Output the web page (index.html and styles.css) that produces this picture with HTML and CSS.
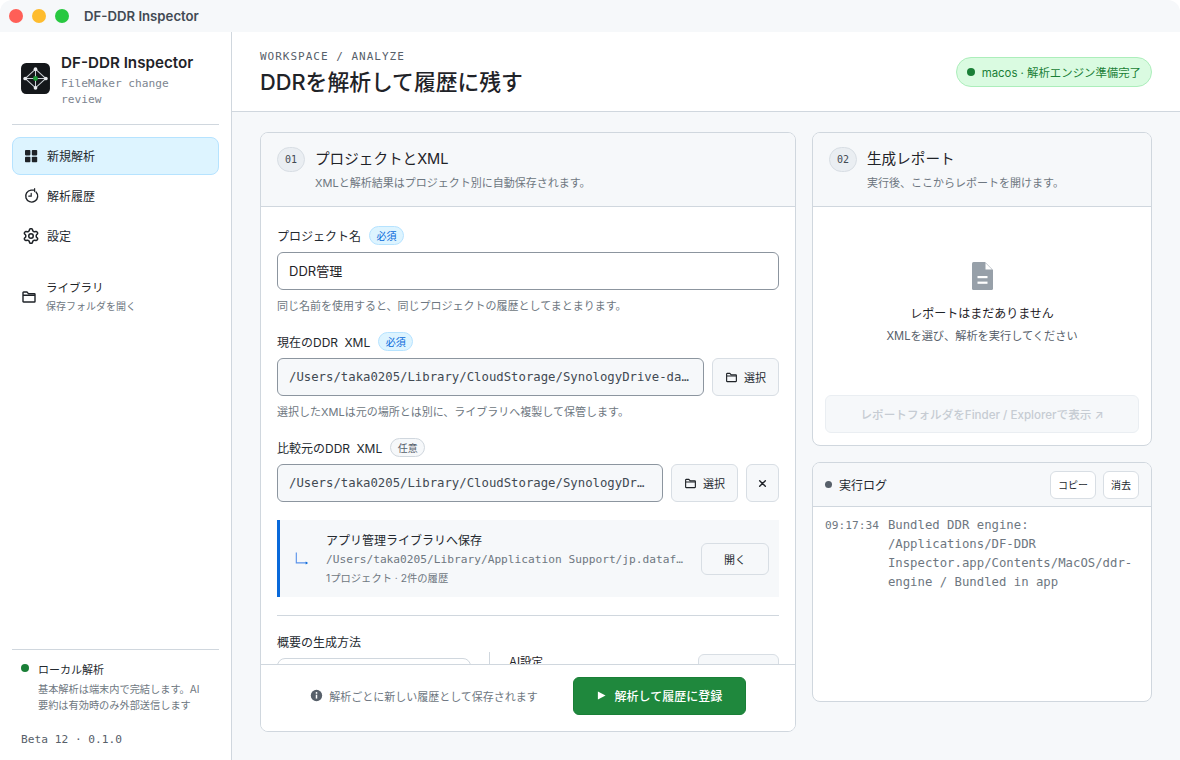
FILE: index.html
```html
<!DOCTYPE html>
<html lang="ja">

<head>
    <meta charset="UTF-8">
    <meta name="viewport" content="width=device-width, initial-scale=1.0">
    <title>DF-DDR Inspector</title>
    <link rel="stylesheet" href="styles.css">
</head>

<body>
    <div class="window">
        <div class="titlebar">
            <span class="light light-red"></span>
            <span class="light light-yellow"></span>
            <span class="light light-green"></span>
            <span class="titlebar-name">DF-DDR Inspector</span>
        </div>

        <div class="app">
            <aside class="sidebar">
                <div class="brand">
                    <svg class="brand-logo" viewBox="0 0 28 30">
                        <rect width="28" height="30" rx="5" fill="#14171a" />
                        <path d="M14 6 L24 15 L14 24 L4 15 Z M14 6 V24 M4 15 H24" fill="none" stroke="#c9ced3" stroke-width="1" />
                        <circle cx="14" cy="6" r="1.8" fill="#e8eaed" />
                        <circle cx="14" cy="24" r="1.8" fill="#e8eaed" />
                        <circle cx="4" cy="15" r="1.8" fill="#e8eaed" />
                        <circle cx="24" cy="15" r="1.8" fill="#e8eaed" />
                        <circle cx="14" cy="15" r="2.4" fill="#1f9d3a" />
                    </svg>
                    <div class="brand-text">
                        <div class="brand-name">DF-DDR Inspector</div>
                        <div class="brand-sub">FileMaker change review</div>
                    </div>
                </div>

                <nav class="nav">
                    <div class="nav-item nav-active">
                        <svg class="nav-icon" viewBox="0 0 16 16" fill="#1f2328">
                            <rect x="2" y="2" width="5.4" height="5.4" rx="0.8" />
                            <rect x="8.8" y="2" width="5.4" height="5.4" rx="0.8" />
                            <rect x="2" y="8.8" width="5.4" height="5.4" rx="0.8" />
                            <rect x="8.8" y="8.8" width="5.4" height="5.4" rx="0.8" />
                        </svg>
                        <span>新規解析</span>
                    </div>
                    <div class="nav-item">
                        <svg class="nav-icon" viewBox="0 0 16 16" fill="none" stroke="#1f2328" stroke-width="1.4" stroke-linecap="round">
                            <path d="M13 3.9 A6 6 0 1 1 8 2.1 H11.6" />
                            <path d="M11.6 0.6 V3.6" stroke-width="1.1" />
                            <path d="M8.2 5.4 V8.2 H5.8" stroke-width="1.2" />
                        </svg>
                        <span>解析履歴</span>
                    </div>
                    <div class="nav-item">
                        <svg class="nav-icon" viewBox="0 0 16 16" fill="#1f2328">
                            <path d="M8 0a8.2 8.2 0 0 1 .701.031C9.444.095 9.99.645 10.16 1.29l.288 1.107c.018.066.079.158.212.224.231.114.454.243.668.386.123.082.233.09.299.071l1.103-.303c.644-.176 1.392.021 1.82.63.27.385.506.792.704 1.218.315.675.111 1.422-.364 1.891l-.814.806c-.049.048-.098.147-.088.294.016.257.016.515 0 .772-.01.147.038.246.088.294l.814.806c.475.469.679 1.216.364 1.891a7.977 7.977 0 0 1-.704 1.217c-.428.61-1.176.807-1.82.63l-1.102-.302c-.067-.019-.177-.011-.3.071a5.909 5.909 0 0 1-.668.386c-.133.066-.194.158-.211.224l-.29 1.106c-.168.646-.715 1.196-1.458 1.26a8.006 8.006 0 0 1-1.402 0c-.743-.064-1.289-.614-1.458-1.26l-.289-1.106c-.018-.066-.079-.158-.212-.224a5.738 5.738 0 0 1-.668-.386c-.123-.082-.233-.09-.299-.071l-1.103.303c-.644.176-1.392-.021-1.82-.63a8.12 8.12 0 0 1-.704-1.218c-.315-.675-.111-1.422.363-1.891l.815-.806c.05-.048.098-.147.088-.294a6.214 6.214 0 0 1 0-.772c.01-.147-.038-.246-.088-.294l-.815-.806C.635 6.045.431 5.298.746 4.623a7.92 7.92 0 0 1 .704-1.217c.428-.61 1.176-.807 1.82-.63l1.102.302c.067.019.177.011.3-.071.214-.143.437-.272.668-.386.133-.066.194-.158.211-.224l.29-1.106C6.009.645 6.556.095 7.299.03 7.53.01 7.764 0 8 0Zm-.571 1.525c-.036.003-.108.036-.137.146l-.289 1.105c-.147.561-.549.967-.998 1.189-.173.086-.34.183-.5.29-.417.278-.97.423-1.529.27l-1.103-.303c-.109-.03-.175.016-.195.045-.22.312-.412.644-.573.99-.014.031-.021.11.059.19l.815.806c.411.406.562.957.53 1.456a4.709 4.709 0 0 0 0 .582c.032.499-.119 1.05-.53 1.456l-.815.806c-.081.08-.073.159-.059.19.162.346.353.677.573.989.02.03.085.076.195.046l1.102-.303c.56-.153 1.113-.008 1.53.27.161.107.328.204.501.29.447.222.85.629.997 1.189l.289 1.105c.029.109.101.143.137.146a6.6 6.6 0 0 0 1.142 0c.036-.003.108-.036.137-.146l.289-1.105c.147-.561.549-.967.998-1.189.173-.086.34-.183.5-.29.417-.278.97-.423 1.529-.27l1.103.303c.109.029.175-.016.195-.045.22-.313.411-.644.573-.99.014-.031.021-.11-.059-.19l-.815-.806c-.411-.406-.562-.957-.53-1.456a4.709 4.709 0 0 0 0-.582c-.032-.499.119-1.05.53-1.456l.815-.806c.081-.08.073-.159.059-.19a6.464 6.464 0 0 0-.573-.989c-.02-.03-.085-.076-.195-.046l-1.102.303c-.56.153-1.113.008-1.53-.27a4.44 4.44 0 0 0-.501-.29c-.447-.222-.85-.629-.997-1.189l-.289-1.105c-.029-.11-.101-.143-.137-.146a6.6 6.6 0 0 0-1.142 0ZM11 8a3 3 0 1 1-6 0 3 3 0 0 1 6 0ZM9.5 8a1.5 1.5 0 1 0-3.001.001A1.5 1.5 0 0 0 9.5 8Z" />
                        </svg>
                        <span>設定</span>
                    </div>
                </nav>

                <div class="library-link">
                    <svg class="nav-icon" viewBox="0 0 16 16" fill="none" stroke="#1f2328" stroke-width="1.4" stroke-linejoin="round">
                        <path d="M2 3.6 Q2 3 2.6 3 H6 L7.4 4.6 H13.4 Q14 4.6 14 5.2 V12.4 Q14 13 13.4 13 H2.6 Q2 13 2 12.4 Z M2 6.2 H14" />
                    </svg>
                    <div>
                        <div class="library-title">ライブラリ</div>
                        <div class="library-sub">保存フォルダを開く</div>
                    </div>
                </div>

                <div class="sidebar-foot">
                    <div class="local">
                        <span class="local-dot"></span>
                        <div>
                            <div class="local-title">ローカル解析</div>
                            <div class="local-text">基本解析は端末内で完結します。AI要約は有効時のみ外部送信します</div>
                        </div>
                    </div>
                    <div class="version">Beta 12 · 0.1.0</div>
                </div>
            </aside>

            <main class="main">
                <header class="header">
                    <div class="header-text">
                        <div class="crumb">WORKSPACE / ANALYZE</div>
                        <h1 class="page-title">DDRを解析して履歴に残す</h1>
                    </div>
                    <div class="status">
                        <span class="status-dot"></span>
                        <span>macos · 解析エンジン準備完了</span>
                    </div>
                </header>

                <div class="content">
                    <section class="card card-form">
                        <div class="card-head">
                            <span class="step">01</span>
                            <div>
                                <h2 class="card-title">プロジェクトとXML</h2>
                                <p class="card-sub">XMLと解析結果はプロジェクト別に自動保存されます。</p>
                            </div>
                        </div>

                        <div class="form-scroll">
                            <div class="field">
                                <div class="label">プロジェクト名 <span class="tag tag-blue">必須</span></div>
                                <div class="input">DDR管理</div>
                                <p class="hint">同じ名前を使用すると、同じプロジェクトの履歴としてまとまります。</p>
                            </div>

                            <div class="field">
                                <div class="label"><span class="label-text">現在のDDR XML</span> <span class="tag tag-blue">必須</span></div>
                                <div class="input-row">
                                    <div class="input input-path">/Users/taka0205/Library/CloudStorage/SynologyDrive-da…</div>
                                    <div class="btn btn-pick">
                                        <svg class="btn-icon" viewBox="0 0 16 16" fill="none" stroke="#1f2328" stroke-width="1.4" stroke-linejoin="round">
                                            <path d="M2 3.6 Q2 3 2.6 3 H6 L7.4 4.6 H13.4 Q14 4.6 14 5.2 V12.4 Q14 13 13.4 13 H2.6 Q2 13 2 12.4 Z M2 6.2 H14" />
                                        </svg>
                                        <span>選択</span>
                                    </div>
                                </div>
                                <p class="hint">選択したXMLは元の場所とは別に、ライブラリへ複製して保管します。</p>
                            </div>

                            <div class="field">
                                <div class="label"><span class="label-text">比較元のDDR XML</span> <span class="tag tag-gray">任意</span></div>
                                <div class="input-row">
                                    <div class="input input-path">/Users/taka0205/Library/CloudStorage/SynologyDr…</div>
                                    <div class="btn btn-pick">
                                        <svg class="btn-icon" viewBox="0 0 16 16" fill="none" stroke="#1f2328" stroke-width="1.4" stroke-linejoin="round">
                                            <path d="M2 3.6 Q2 3 2.6 3 H6 L7.4 4.6 H13.4 Q14 4.6 14 5.2 V12.4 Q14 13 13.4 13 H2.6 Q2 13 2 12.4 Z M2 6.2 H14" />
                                        </svg>
                                        <span>選択</span>
                                    </div>
                                    <div class="btn btn-clear">
                                        <svg class="btn-icon" viewBox="0 0 16 16" fill="none" stroke="#1f2328" stroke-width="1.7" stroke-linecap="round">
                                            <path d="M4.5 4.5 L11.5 11.5 M11.5 4.5 L4.5 11.5" />
                                        </svg>
                                    </div>
                                </div>
                            </div>

                            <div class="store">
                                <svg class="store-icon" viewBox="0 0 16 16" fill="none" stroke="#5b93ea" stroke-width="1.3">
                                    <path d="M1.5 0.5 V12.5 H13" />
                                    <path d="M12.2 10.8 L15 12.5 L12.2 14.2 Z" fill="#0969da" stroke="none" />
                                </svg>
                                <div class="store-text">
                                    <div class="store-title">アプリ管理ライブラリへ保存</div>
                                    <div class="store-path">/Users/taka0205/Library/Application Support/jp.dataf…</div>
                                    <div class="store-count">1プロジェクト · 2件の履歴</div>
                                </div>
                                <div class="btn btn-open">開く</div>
                            </div>

                            <div class="rule"></div>

                            <div class="summary">
                                <div class="label">概要の生成方法</div>
                                <div class="summary-row">
                                    <div class="summary-choice"></div>
                                    <div class="summary-ai">
                                        <div class="summary-ai-label">AI設定</div>
                                        <div class="summary-ai-btn"></div>
                                    </div>
                                </div>
                            </div>
                        </div>

                        <div class="card-foot">
                            <div class="foot-note">
                                <svg class="foot-info" viewBox="0 0 16 16">
                                    <circle cx="8" cy="8" r="7" fill="#57606a" />
                                    <rect x="7.1" y="7" width="1.8" height="4.8" fill="#fff" />
                                    <circle cx="8" cy="4.8" r="1.1" fill="#fff" />
                                </svg>
                                <span>解析ごとに新しい履歴として保存されます</span>
                            </div>
                            <div class="btn-run">
                                <svg class="run-icon" viewBox="0 0 10 10" fill="#fff">
                                    <path d="M1 0.5 L9.5 5 L1 9.5 Z" />
                                </svg>
                                <span>解析して履歴に登録</span>
                            </div>
                        </div>
                    </section>

                    <div class="side-col">
                        <section class="card card-report">
                            <div class="card-head">
                                <span class="step">02</span>
                                <div>
                                    <h2 class="card-title">生成レポート</h2>
                                    <p class="card-sub">実行後、ここからレポートを開けます。</p>
                                </div>
                            </div>
                            <div class="report-empty">
                                <svg class="report-icon" viewBox="0 0 21 28">
                                    <path d="M1.5 0 H13 L21 8 V26.5 Q21 28 19.5 28 H1.5 Q0 28 0 26.5 V1.5 Q0 0 1.5 0 Z" fill="#97a0a9" />
                                    <path d="M13.5 1 L20 7.6 H13.5 Z" fill="#fff" />
                                    <rect x="5.5" y="14" width="10" height="2.2" fill="#fff" />
                                    <rect x="5.5" y="19.6" width="10" height="2.2" fill="#fff" />
                                </svg>
                                <div class="report-title">レポートはまだありません</div>
                                <div class="report-text">XMLを選び、解析を実行してください</div>
                            </div>
                            <div class="report-btn">
                                <span>レポートフォルダをFinder / Explorerで表示 ↗</span>
                            </div>
                        </section>

                        <section class="card card-log">
                            <div class="log-head">
                                <span class="log-dot"></span>
                                <span class="log-title">実行ログ</span>
                                <span class="log-btn log-btn-first">コピー</span>
                                <span class="log-btn">消去</span>
                            </div>
                            <div class="log-body">
                                <span class="log-time">09:17:34</span>
                                <span class="log-msg">Bundled DDR engine: /Applications/DF-DDR Inspector.app/Contents/MacOS/ddr-engine / Bundled in app</span>
                            </div>
                        </section>
                    </div>
                </div>
            </main>
        </div>
    </div>
</body>

</html>
```

FILE: styles.css
```css
* {
    box-sizing: border-box;
}

html,
body {
    margin: 0;
    height: 100%;
    overflow: hidden;
    background: #f6f8fa;
}

body {
    font-family: Inter, "Noto Sans CJK JP", sans-serif;
    color: #1f2328;
    font-size: 13px;
}

.window {
    display: flex;
    flex-direction: column;
    height: 760px;
    background: #fff;
    overflow: hidden;
}

/* title bar */
.titlebar {
    display: flex;
    align-items: center;
    height: 32px;
    padding-left: 9px;
    background: #f6f8fa;
    border-radius: 12px 12px 0 0;
}

.light {
    width: 14px;
    height: 14px;
    border-radius: 50%;
    margin-right: 9px;
}

.light-red {
    background: #ff5f57;
}

.light-yellow {
    background: #febc2e;
}

.light-green {
    background: #28c840;
}

.titlebar-name {
    margin-left: 6px;
    font-size: 13.2px;
    font-weight: 600;
    color: #424a53;
}

.app {
    display: flex;
    flex: 1;
    min-height: 0;
}

/* sidebar */
.sidebar {
    display: flex;
    flex-direction: column;
    width: 232px;
    padding: 0 12px;
    background: #fff;
    border-right: 1px solid #d0d7de;
}

.brand {
    display: flex;
    align-items: center;
    gap: 11px;
    height: 93px;
    padding: 0 0 0 9px;
    border-bottom: 1px solid #d0d7de;
}

.brand-logo {
    width: 29px;
    height: 31px;
    flex: none;
}

.brand-text {
    width: 135px;
    margin-top: 5px;
}

.brand-name {
    font-size: 15.2px;
    font-weight: 600;
    line-height: 20px;
    white-space: nowrap;
}

.brand-sub {
    font-family: "DejaVu Sans Mono", monospace;
    font-size: 11.2px;
    line-height: 16px;
    color: #7d8590;
    margin-top: 3px;
}

.nav {
    display: flex;
    flex-direction: column;
    gap: 2px;
    margin-top: 12px;
}

.nav-item {
    display: flex;
    align-items: center;
    gap: 8px;
    height: 38px;
    padding: 0 0 1px 10px;
    border: 1px solid transparent;
    border-radius: 8px;
    font-size: 12px;
    color: #24292f;
}

.nav-active {
    background: #ddf4ff;
    border-color: #b6e3ff;
}

.nav-icon {
    width: 16px;
    height: 16px;
    flex: none;
}

.library-link {
    display: flex;
    align-items: center;
    gap: 9px;
    margin-top: 24px;
    padding-left: 9px;
}

.library-title {
    font-size: 11.5px;
    line-height: 18px;
}

.library-sub {
    font-size: 10px;
    line-height: 18px;
    color: #6e7781;
}

.sidebar-foot {
    margin-top: auto;
    border-top: 1px solid #d0d7de;
}

.local {
    display: flex;
    gap: 9px;
    padding: 10px 0 0 9px;
}

.local-dot {
    width: 8px;
    height: 8px;
    margin-top: 4px;
    border-radius: 50%;
    background: #1a7f37;
    flex: none;
}

.local-title {
    font-size: 11px;
    line-height: 20px;
    color: #24292f;
}

.local-text {
    max-width: 168px;
    margin-top: 1px;
    font-size: 10.2px;
    line-height: 16px;
    color: #6e7781;
}

.version {
    margin: 19px 0 12px 9px;
    font-family: "DejaVu Sans Mono", monospace;
    font-size: 11.2px;
    line-height: 16px;
    color: #57606a;
}

/* main area */
.main {
    display: flex;
    flex-direction: column;
    flex: 1;
    min-width: 0;
    background: #f6f8fa;
}

.header {
    display: flex;
    justify-content: space-between;
    align-items: center;
    height: 80px;
    padding: 0 28px;
    background: #fff;
    border-bottom: 1px solid #d0d7de;
}

.header-text {
    margin-top: 3px;
}

.crumb {
    font-family: "DejaVu Sans Mono", monospace;
    font-size: 11px;
    letter-spacing: 1px;
    line-height: 14px;
    color: #57606a;
}

.page-title {
    margin: 4px 0 0;
    font-size: 21.8px;
    font-weight: 500;
    line-height: 28px;
    color: #1f2328;
}

.status {
    display: flex;
    align-items: center;
    gap: 7px;
    height: 30px;
    padding: 0 10px;
    background: #dafbe1;
    border: 1px solid #aceebb;
    border-radius: 15px;
    font-size: 11.4px;
    color: #1a7f37;
}

.status-dot {
    width: 8px;
    height: 8px;
    border-radius: 50%;
    background: #1a7f37;
}

.content {
    display: flex;
    gap: 16px;
    flex: 1;
    min-height: 0;
    padding: 20px 28px 28px;
}

/* cards */
.card {
    display: flex;
    flex-direction: column;
    background: #fff;
    border: 1px solid #d0d7de;
    border-radius: 8px;
    overflow: hidden;
}

.card-form {
    width: 536px;
}

.card-head {
    display: flex;
    gap: 10px;
    height: 74px;
    padding: 14px 16px 0;
    background: #f6f8fa;
    border-bottom: 1px solid #d0d7de;
    flex: none;
}

.step {
    display: flex;
    align-items: center;
    justify-content: center;
    width: 28px;
    height: 25px;
    border: 1px solid #d8dee4;
    border-radius: 13px;
    background: #eaeef2;
    font-family: "DejaVu Sans Mono", monospace;
    font-size: 10px;
    color: #424a53;
    flex: none;
}

.card-title {
    margin: 0;
    font-size: 14.6px;
    font-weight: 400;
    line-height: 24px;
}

.card-sub {
    margin: 3px 0 0;
    font-size: 11px;
    line-height: 18px;
    color: #6e7781;
}

.form-scroll {
    flex: 1;
    min-height: 0;
    padding: 17px 16px 0;
    overflow: hidden;
}

.field {
    margin-bottom: 15px;
}

.label {
    display: flex;
    align-items: center;
    gap: 8px;
    height: 22px;
    margin-bottom: 6px;
    font-size: 12px;
    font-weight: 400;
    color: #24292f;
}

.label-text {
    word-spacing: 3px;
}

.tag {
    display: inline-flex;
    align-items: center;
    height: 19px;
    padding: 0 6.5px;
    border-radius: 10px;
    font-size: 10px;
    font-weight: 400;
}

.tag-blue {
    background: #ddf4ff;
    border: 1px solid #b6e3ff;
    color: #0969da;
}

.tag-gray {
    background: #f6f8fa;
    border: 1px solid #d0d7de;
    color: #57606a;
}

.input {
    height: 38px;
    padding: 0 11px;
    border: 1px solid #8c959f;
    border-radius: 6px;
    background: #fff;
    font-size: 13px;
    line-height: 36px;
    color: #1f2328;
}

.input-row {
    display: flex;
    gap: 8px;
}

.input-path {
    flex: 1;
    min-width: 0;
    background: #f6f8fa;
    font-family: "DejaVu Sans Mono", monospace;
    font-size: 12.3px;
    color: #424a53;
    white-space: nowrap;
}

.hint {
    margin: 7px 0 0;
    font-size: 11px;
    line-height: 18px;
    color: #6e7781;
}

.btn {
    display: flex;
    align-items: center;
    justify-content: center;
    flex: none;
    height: 38px;
    background: #f6f8fa;
    border: 1px solid #d8dee4;
    border-radius: 6px;
    font-size: 11px;
    color: #24292f;
}

.btn-pick {
    width: 67px;
    gap: 6px;
}

.btn-clear {
    width: 33px;
}

.btn-icon {
    width: 13px;
    height: 13px;
}

.btn-open {
    width: 68px;
    height: 32px;
}

/* storage box */
.store {
    display: flex;
    align-items: center;
    height: 77px;
    margin-top: 18px;
    padding: 0 10px 0 15px;
    background: #f6f8fa;
    border-left: 3px solid #0969da;
}

.store-icon {
    width: 14px;
    height: 14px;
    flex: none;
}

.store-text {
    flex: 1;
    min-width: 0;
    margin: 0 14px 0 17px;
}

.store-title {
    font-size: 12px;
    line-height: 20px;
    color: #24292f;
}

.store-path {
    font-family: "DejaVu Sans Mono", monospace;
    font-size: 11.2px;
    line-height: 18px;
    color: #6e7781;
    white-space: nowrap;
}

.store-count {
    font-size: 10.3px;
    line-height: 18px;
    color: #6e7781;
}

.rule {
    height: 1px;
    margin: 18px 0 14px;
    background: #d0d7de;
}

.summary .label {
    margin-bottom: 6px;
}

.summary-row {
    display: flex;
}

.summary-choice {
    width: 194px;
    height: 40px;
    border: 1px solid #d0d7de;
    border-radius: 8px;
}

.summary-ai {
    display: flex;
    justify-content: space-between;
    width: 290px;
    margin: -6px 0 0 18px;
    padding-left: 19px;
    border-left: 1px solid #d0d7de;
}

.summary-ai-label {
    margin-top: 1px;
    font-size: 11.5px;
    font-weight: 400;
}

.summary-ai-btn {
    width: 81px;
    height: 40px;
    margin-top: 2px;
    border: 1px solid #d8dee4;
    border-radius: 6px;
    background: #f6f8fa;
}

.card-foot {
    display: flex;
    align-items: center;
    justify-content: center;
    gap: 35px;
    height: 67px;
    padding-bottom: 5px;
    flex: none;
    background: #fff;
    border-top: 1px solid #d0d7de;
}

.foot-note {
    display: flex;
    align-items: center;
    gap: 6px;
    font-size: 11px;
    color: #6e7781;
}

.foot-info {
    width: 13px;
    height: 13px;
}

.btn-run {
    display: flex;
    align-items: center;
    justify-content: center;
    gap: 9px;
    width: 173px;
    height: 38px;
    background: #1f883d;
    border: 1px solid #1a7f37;
    border-radius: 6px;
    font-size: 12px;
    font-weight: 500;
    color: #fff;
}

.run-icon {
    width: 9px;
    height: 9px;
}

/* right column */
.side-col {
    display: flex;
    flex-direction: column;
    gap: 16px;
    width: 340px;
}

.card-report {
    height: 314px;
}

.report-empty {
    display: flex;
    flex-direction: column;
    align-items: center;
    flex: 1;
    padding-top: 55px;
}

.report-icon {
    width: 21px;
    height: 28px;
}

.report-title {
    margin-top: 14px;
    font-size: 12px;
    line-height: 20px;
    color: #1f2328;
}

.report-text {
    margin-top: 2px;
    font-size: 11.2px;
    line-height: 20px;
    color: #57606a;
}

.report-btn {
    display: flex;
    align-items: center;
    justify-content: center;
    height: 38px;
    margin: 0 12px 12px;
    background: #f6f8fa;
    border: 1px solid #eaeef2;
    border-radius: 6px;
    font-size: 11.6px;
    font-weight: 500;
    color: #c6ccd3;
}

.card-log {
    height: 240px;
}

.log-head {
    display: flex;
    align-items: center;
    height: 44px;
    padding: 0 12px;
    background: #f6f8fa;
    border-bottom: 1px solid #d0d7de;
    flex: none;
}

.log-dot {
    width: 7px;
    height: 7px;
    border-radius: 50%;
    background: #57606a;
    margin-right: 7px;
}

.log-title {
    font-size: 12px;
    font-weight: 400;
    color: #24292f;
}

.log-btn {
    display: flex;
    align-items: center;
    justify-content: center;
    height: 28px;
    padding: 0 7px;
    margin-left: 7px;
    background: #fff;
    border: 1px solid #d8dee4;
    border-radius: 6px;
    font-size: 10px;
    color: #24292f;
}

.log-btn-first {
    margin-left: auto;
}

.log-body {
    display: flex;
    gap: 9px;
    padding: 9px 12px;
    font-family: "DejaVu Sans Mono", monospace;
    font-size: 12.3px;
    line-height: 19px;
    color: #6e7781;
}

.log-time {
    flex: none;
    font-size: 11.2px;
}
```
